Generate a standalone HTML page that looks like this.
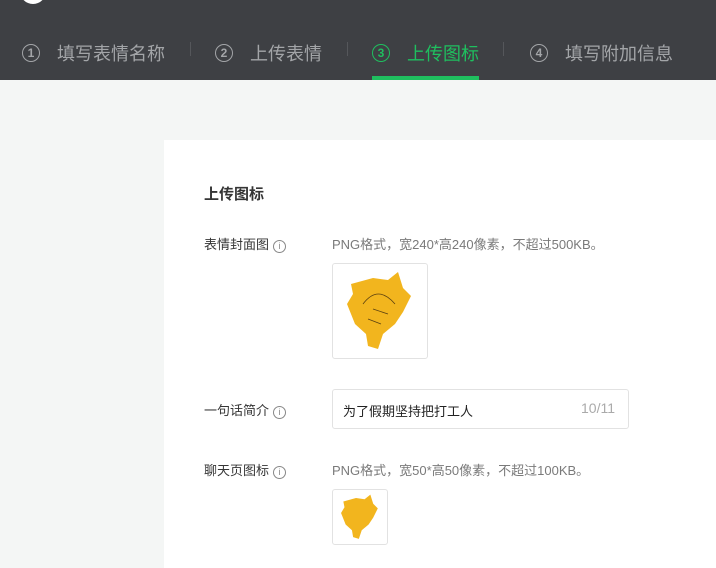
<!DOCTYPE html><html><head><meta charset="utf-8"><style>
body{margin:0;width:716px;height:568px;overflow:hidden;background:#f4f6f5;font-family:"Liberation Sans","Noto Sans CJK SC",sans-serif;position:relative}
.hd{position:absolute;left:0;top:0;width:716px;height:80px;background:#3e4044}
.t{position:absolute;top:41px;font-size:18px;color:#a3a5a8;white-space:nowrap;line-height:26px}
.t span{display:inline-block;width:18px;height:18px;border:1.5px solid #a3a5a8;border-radius:50%;font-size:12px;font-weight:bold;line-height:16px;text-align:center;margin-right:17px;vertical-align:3px;box-sizing:border-box}
.sep{position:absolute;top:42px;width:1px;height:14px;background:#55575b}
.card{position:absolute;left:164px;top:140px;width:560px;height:428px;background:#fff}
.l{position:absolute;left:204px;font-size:13px;color:#353535}
.l i{display:inline-block;width:11px;height:11px;border:1px solid #888;border-radius:50%;font-size:9px;line-height:11px;text-align:center;font-style:normal;color:#888;margin-left:4px;vertical-align:0}
.d{position:absolute;left:332px;font-size:13px;color:#7a7a7a}
.box{position:absolute;border:1px solid #e2e2e2;border-radius:3px;background:#fff}
</style></head><body>
<div class="hd">
<div style="position:absolute;left:20px;top:-22px;width:26px;height:26px;border-radius:50%;background:#fff"></div>
<div class="t" style="left:22px"><span>1</span>填写表情名称</div>
<div class="sep" style="left:190px"></div>
<div class="t" style="left:215px"><span>2</span>上传表情</div>
<div class="sep" style="left:347px"></div>
<div class="t" style="left:372px;color:#1fbf5f"><span style="border-color:#1fbf5f">3</span>上传图标</div>
<div style="position:absolute;left:372px;top:76px;width:107px;height:4px;background:#1fbf5f"></div>
<div class="sep" style="left:503px"></div>
<div class="t" style="left:530px"><span>4</span>填写附加信息</div>
</div>
<div class="card"></div>
<div style="position:absolute;left:204px;top:183px;font-size:15px;font-weight:bold;color:#353535">上传图标</div>
<div class="l" style="top:234px">表情封面图<i>i</i></div>
<div class="d" style="top:234px">PNG格式，宽240*高240像素，不超过500KB。</div>
<div class="box" style="left:332px;top:263px;width:94px;height:94px">
<svg width="94" height="94" viewBox="0 0 94 94"><polygon points="18,20 40,14 55,16 65,8 70,24 78,32 70,48 62,60 50,70 45,85 35,82 33,70 22,60 14,40 20,30" fill="#f2b51e"/><path d="M30,40 Q45,20 62,40 M35,55 L48,60 M40,45 L55,50" stroke="#5a4010" fill="none" stroke-width="0.8"/></svg></div>
<div class="l" style="top:400px">一句话简介<i>i</i></div>
<div class="box" style="left:332px;top:389px;width:295px;height:38px"><div style="position:absolute;left:10px;top:11px;font-size:13px;color:#222">为了假期坚持把打工人</div><div style="position:absolute;right:13px;top:10px;font-size:14px;color:#aaa">10/11</div></div>
<div class="l" style="top:460px">聊天页图标<i>i</i></div>
<div class="d" style="top:460px">PNG格式，宽50*高50像素，不超过100KB。</div>
<div class="box" style="left:332px;top:489px;width:54px;height:54px">
<svg width="54" height="54" viewBox="0 0 94 94"><polygon points="18,20 40,14 55,16 65,8 70,24 78,32 70,48 62,60 50,70 45,85 35,82 33,70 22,60 14,40 20,30" fill="#f2b51e"/></svg></div>
</body></html>
